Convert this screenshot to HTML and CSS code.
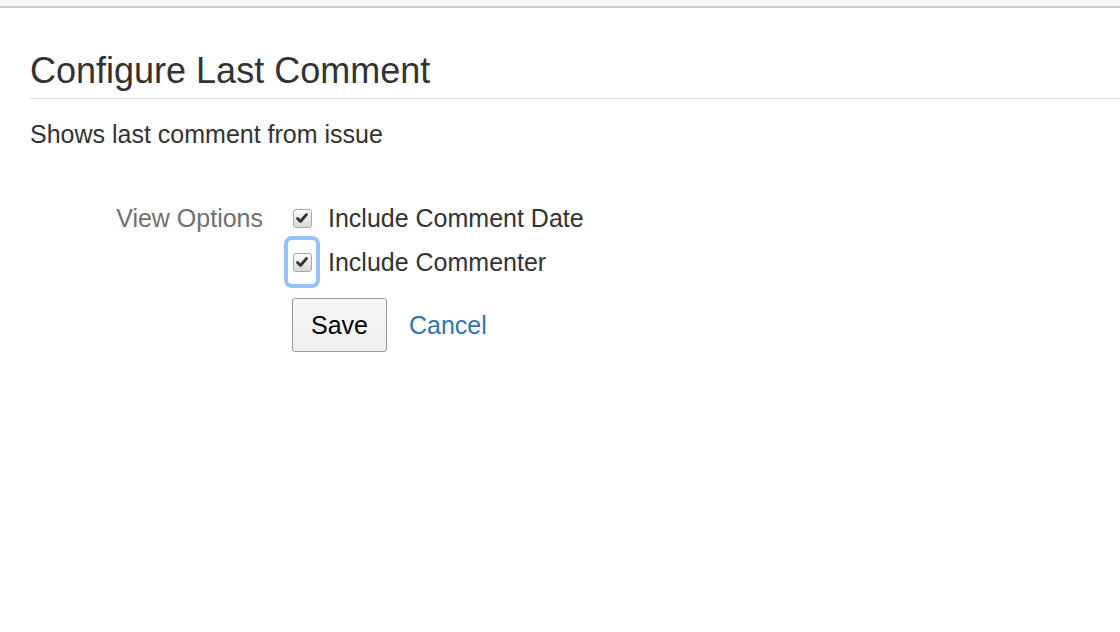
FILE: index.html
```html
<!DOCTYPE html>
<html lang="en">
<head>
  <meta charset="UTF-8">
  <title>Configure Last Comment</title>
  <link rel="stylesheet" href="styles.css">
</head>
<body>
  <div class="topbar"></div>
  <div class="content">
    <h1>Configure Last Comment</h1>
    <p class="desc">Shows last comment from issue</p>

    <form class="config-form">
      <div class="field-label">View Options</div>
      <div class="field-options">
        <label class="option">
          <span class="box-wrap">
            <span class="box">
              <svg width="18" height="18" viewBox="0 0 18 18"><path d="M4.5 9.5 L7.5 12.5 L13.5 5.5" fill="none" stroke="#333" stroke-width="2.8" stroke-linecap="round" stroke-linejoin="round"/></svg>
            </span>
          </span>
          Include Comment Date
        </label>
        <label class="option">
          <span class="box-wrap focused">
            <span class="box">
              <svg width="18" height="18" viewBox="0 0 18 18"><path d="M4.5 9.5 L7.5 12.5 L13.5 5.5" fill="none" stroke="#333" stroke-width="2.8" stroke-linecap="round" stroke-linejoin="round"/></svg>
            </span>
          </span>
          Include Commenter
        </label>
        <div class="buttons">
          <button type="button" class="btn">Save</button>
          <a href="#" class="cancel">Cancel</a>
        </div>
      </div>
    </form>
  </div>
</body>
</html>
```

FILE: styles.css
```css
body {
  margin: 0;
  font-family: "Liberation Sans", Arial, sans-serif;
  color: #333;
  background: #fff;
}

.topbar {
  height: 6px;
  background: #f5f5f5;
  border-bottom: 2px solid #ccc;
}

.content {
  padding-left: 30px;
}

h1 {
  margin: 41px 0 0;
  padding-bottom: 5px;
  font-size: 36px;
  font-weight: normal;
  line-height: 44px;
  color: #333;
  border-bottom: 1px solid #ddd;
}

.desc {
  margin: 20px 0 0;
  font-size: 25px;
  line-height: 30px;
}

.config-form {
  display: grid;
  grid-template-columns: 233px 1fr;
  column-gap: 25px;
  margin-top: 47px;
  font-size: 25px;
}

.field-label {
  text-align: right;
  color: #707070;
  line-height: 44px;
}

.option {
  display: flex;
  align-items: center;
  gap: 12px;
  height: 44px;
  line-height: 44px;
}

.box-wrap {
  display: flex;
  align-items: center;
  justify-content: center;
  width: 28px;
  height: 44px;
  box-sizing: border-box;
  border-radius: 4px;
}

.box-wrap.focused {
  box-shadow: 0 0 0 4px #8ec3fb;
}

.box {
  display: flex;
  width: 19px;
  height: 19px;
  box-sizing: border-box;
  border: 1px solid #a8a8a8;
  border-radius: 3px;
  background: linear-gradient(#fcfcfc, #d8d8d8);
}

.box svg {
  margin: -1px;
}

.buttons {
  display: flex;
  align-items: center;
  margin-top: 14px;
  padding-left: 4px;
}

.btn {
  font-family: "Liberation Sans", Arial, sans-serif;
  font-size: 25px;
  line-height: 30px;
  padding: 11px 18px;
  color: #000;
  background: linear-gradient(#f7f7f7, #eeeeee);
  border: 1px solid #999;
  border-radius: 3px;
}

.cancel {
  margin-left: 22px;
  color: #3572b0;
  text-decoration: none;
}
```
